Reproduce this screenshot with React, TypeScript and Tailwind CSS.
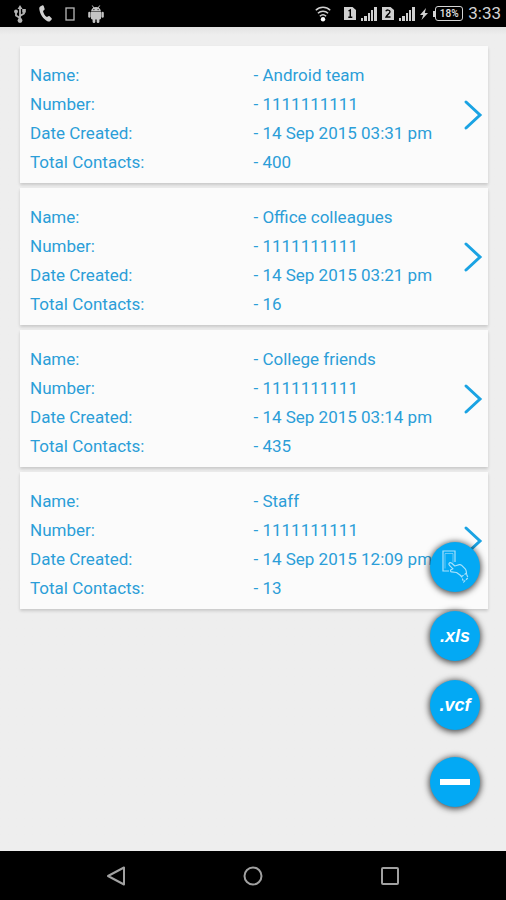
const backups = [
  { name: "Android team", number: "1111111111", created: "14 Sep 2015 03:31 pm", total: 400 },
  { name: "Office colleagues", number: "1111111111", created: "14 Sep 2015 03:21 pm", total: 16 },
  { name: "College friends", number: "1111111111", created: "14 Sep 2015 03:14 pm", total: 435 },
  { name: "Staff", number: "1111111111", created: "14 Sep 2015 12:09 pm", total: 13 },
]

type Backup = (typeof backups)[number]

function UsbIcon() {
  return (
    <svg width="12" height="18" viewBox="0 0 12 18" fill="none" stroke="#b4b4b4" strokeWidth="1.8">
      <path d="M6 3v12M6 13L2 10.5V7M6 11l4-2.5V5.5" />
      <path d="M6 0l2.500 4h-5z" fill="#b4b4b4" stroke="none" />
      <circle cx="6" cy="15.5" r="2.4" fill="#b4b4b4" stroke="none" />
      <circle cx="2" cy="6.5" r="1.9" fill="#b4b4b4" stroke="none" />
      <rect x="8.2" y="4" width="3.6" height="3.6" fill="#b4b4b4" stroke="none" />
    </svg>
  )
}

function CallIcon() {
  return (
    <svg width="13" height="17" viewBox="0 0 13 17" fill="#d0d0d0">
      <path d="M1.2 1.5L3.5.3c.5-.2.9 0 1.1.5l1 2.9c.2.5 0 .9-.4 1.2L4 5.900c.5 2.5 1.8 4.600 3.900 6.200l1.500-.9c.4-.3.9-.2 1.200.1l2 2c.4.4.4.9 0 1.300L11 16.300c-.6.4-1.400.4-2.100.1C4.300 14.300 1 9.500.3 4.100c-.1-1.100.1-2.100.9-2.600z" />
    </svg>
  )
}

function AndroidIcon() {
  return (
    <svg width="16" height="18" viewBox="0 0 16 18" fill="#c4c4c4">
      <path d="M3 6.600C3.200 4 5.200 2 8 2s4.800 2 5 4.600z" />
      <path d="M4.300.5l1.500 2.400M11.700.5l-1.500 2.400" stroke="#c4c4c4" />
      <path d="M3 7h10v6.200c0 .7-.5 1.200-1.200 1.200H4.200c-.7 0-1.200-.5-1.200-1.200z" />
      <rect x="0.2" y="6.800" width="2.400" height="6" rx="1.200" />
      <rect x="13.400" y="6.800" width="2.400" height="6" rx="1.200" />
      <rect x="4.600" y="12" width="2.700" height="6" rx="1.300" />
      <rect x="8.700" y="12" width="2.700" height="6" rx="1.300" />
      <circle cx="5.900" cy="4.600" r="0.600" fill="#000" />
      <circle cx="10.100" cy="4.600" r="0.600" fill="#000" />
    </svg>
  )
}

function WifiIcon() {
  return (
    <svg width="16" height="16" viewBox="0 0 16 16" fill="none" stroke="#d0d0d0" strokeWidth="1.5">
      <path d="M.8 4.300C4.800.3 11.200.3 15.200 4.300M2.900 7.300c2.900-2.800 7.300-2.800 10.200 0M4.900 10.300c1.800-1.700 4.400-1.700 6.200 0" />
      <circle cx="8" cy="13.300" r="2.200" fill="#fff" stroke="none" />
    </svg>
  )
}

function SimIcon({ slot }: { slot: number }) {
  return (
    <svg width="12" height="13" viewBox="0 0 12 13">
      <path d="M0 0h8.500L12 3v10H0z" fill="#d0d0d0" />
      <path
        d={slot === 1 ? "M4.500 4L6.300 3v7M4.300 10.200h4" : "M3.800 4.200C4.500 2.600 8 2.600 8 4.800 8 6.500 5 7.500 4 10h4.500"}
        fill="none"
        stroke="#000"
        strokeWidth="1.4"
      />
    </svg>
  )
}

function SignalIcon() {
  return (
    <svg width="16" height="14" viewBox="0 0 16 14" fill="#d0d0d0">
      <rect x="0" y="11" width="2" height="3" />
      <rect x="3" y="9" width="3" height="5" />
      <rect x="7" y="6" width="2" height="8" />
      <rect x="10" y="3" width="2" height="11" />
      <rect x="13" y="0" width="3" height="14" />
    </svg>
  )
}

function StatusBar() {
  return (
    <header className="flex h-[27px] items-center justify-between bg-black pl-[14px] pr-[5px]">
      <div className="flex items-center gap-[13px]">
        <UsbIcon />
        <CallIcon />
        <svg width="10" height="14" viewBox="0 0 10 14" fill="none" stroke="#b8b8b8">
          <rect x="1" y="1" width="8" height="12" strokeWidth="1.3" />
        </svg>
        <AndroidIcon />
      </div>
      <div className="flex items-center gap-[5px]">
        <WifiIcon />
        <span className="ml-2 flex items-center gap-[5px]">
          <SimIcon slot={1} />
          <SignalIcon />
          <SimIcon slot={2} />
          <SignalIcon />
        </span>
        <svg width="8" height="12" viewBox="0 0 8 12" fill="#d0d0d0">
          <path d="M6 0L0 7h3.200L1.500 12 8 5H4.800z" />
        </svg>
        <span className="flex items-center">
          <span className="h-[6px] w-[2px] bg-neutral-300" />
          <span className="flex h-[15px] w-[28px] items-center justify-center rounded-[3px] border border-neutral-300 text-[10px] font-medium text-neutral-200">
            18%
          </span>
        </span>
        <span className="text-[17px] leading-none text-neutral-300">3:33</span>
      </div>
    </header>
  )
}

function BackupCard({ backup }: { backup: Backup }) {
  const rows = [
    ["Name:", backup.name],
    ["Number:", backup.number],
    ["Date Created:", backup.created],
    ["Total Contacts:", backup.total],
  ]

  return (
    <li className="flex items-center bg-[#fbfbfb] pl-[10px] pr-[5px] shadow-[0_2px_3px_rgba(0,0,0,0.16)]">
      <dl className="flex-1 pt-[15px] pb-[6px] text-[17px] leading-[29px] text-[#2b9ed8]">
        {rows.map(([label, value]) => (
          <div key={label} className="flex">
            <dt className="w-1/2 pr-1">{label}</dt>
            <dd className="-mr-4 flex-1 whitespace-nowrap pl-[7px]">- {value}</dd>
          </div>
        ))}
      </dl>
      <button type="button" aria-label={`Open ${backup.name}`}>
        <svg width="20" height="32" viewBox="0 0 20 32" fill="none" stroke="#1aa3e3" strokeWidth="3">
          <path d="M3 3l14 13L3 29" strokeLinecap="round" />
        </svg>
      </button>
    </li>
  )
}

const fab =
  "flex size-[50px] items-center justify-center rounded-full bg-[#03a9f4] text-white shadow-[0_1px_6px_1px_rgba(0,0,0,0.7)]"

function ActionButtons() {
  return (
    <div className="absolute right-[26px] bottom-[44px] flex flex-col gap-[19px]">
      <button type="button" aria-label="Pick contacts" className={fab}>
        <svg width="30" height="34" viewBox="0 0 30 34" fill="none" stroke="#a9e1fb" strokeWidth="1.2">
          <path d="M9 21H3V1h12v11" />
          <path d="M5 3.500h8v9M5 3.500v15" strokeWidth="0.6" />
          <path
            d="M9 13.500c.6-1.200 2-1 2.800-.2l3 2.700 4.500-1.300c1-.3 1.700.1 2.400.7l3.500 3.500c.8.9 1 1.800 1.100 2.800l.3 3M9 13.500c-.3.7 0 1.300.5 1.800l3.500 3.500-2 1c-.9.7-.5 2 .6 2.100l4.900.6 3.500 2.500 1.500 1.500"
            strokeLinejoin="round"
          />
          <path d="M21.500 26.500l4.700-3 1.800 4.200-4.300 4.300z" strokeDasharray="2.5 1" />
        </svg>
      </button>
      <button type="button" className={`${fab} font-['Liberation_Sans',sans-serif] text-[18px] font-bold italic`}>
        .xls
      </button>
      <button type="button" className={`${fab} font-['Liberation_Sans',sans-serif] text-[18px] font-bold italic`}>
        .vcf
      </button>
      <button type="button" aria-label="Close menu" className={`${fab} mt-2`}>
        <span className="h-[6px] w-[30px] bg-white" />
      </button>
    </div>
  )
}

function NavBar() {
  return (
    <nav className="flex h-[49px] items-center justify-center gap-[117px] bg-black text-neutral-400">
      <button type="button" aria-label="Back">
        <svg width="20" height="20" viewBox="0 0 20 20" fill="none" stroke="currentColor" strokeWidth="2">
          <path d="M18 1.500v17L2 10z" strokeLinejoin="round" />
        </svg>
      </button>
      <button type="button" aria-label="Home">
        <svg width="20" height="20" viewBox="0 0 20 20" fill="none" stroke="currentColor" strokeWidth="2">
          <circle cx="10" cy="10" r="8.500" />
        </svg>
      </button>
      <button type="button" aria-label="Recent apps">
        <svg width="20" height="20" viewBox="0 0 20 20" fill="none" stroke="currentColor" strokeWidth="2">
          <rect x="2" y="2" width="16" height="16" rx="1" />
        </svg>
      </button>
    </nav>
  )
}

export default function App() {
  return (
    <div className="flex min-h-screen flex-col bg-[#eeeeee] font-[Roboto,sans-serif]">
      <StatusBar />
      <main className="relative flex-1 bg-linear-to-b from-[#e2e2e2] to-[#eeeeee] to-[8px] pt-[19px] pr-[18px] pb-4 pl-5">
        <ul className="flex flex-col gap-[5px]">
          {backups.map((backup) => (
            <BackupCard key={backup.name} backup={backup} />
          ))}
        </ul>
        <ActionButtons />
      </main>
      <NavBar />
    </div>
  )
}
